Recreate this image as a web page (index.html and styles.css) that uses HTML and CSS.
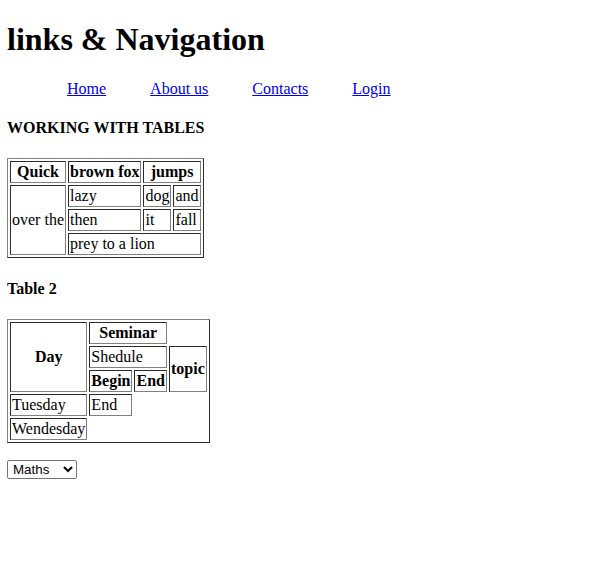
FILE: index.html
```html
<!DOCTYPE html>
<html>
<head>
<meta charset="utf-8">
<title>links &amp; Navigation</title>
<link rel="stylesheet" href="styles.css">
</head>
<body class="page">
<h1 class="title">links &amp; Navigation</h1>
<div class="nav">
  <a class="nav-link" href="#">Home</a>
  <a class="nav-link" href="#">About us</a>
  <a class="nav-link" href="#">Contacts</a>
  <a class="nav-link" href="#">Login</a>
</div>
<h4 class="heading">WORKING WITH TABLES</h4>
<table class="grid">
  <tr>
    <th class="cell head">Quick</th>
    <th class="cell head">brown fox</th>
    <th class="cell head" colspan="2">jumps</th>
  </tr>
  <tr>
    <td class="cell" rowspan="3">over the</td>
    <td class="cell">lazy</td>
    <td class="cell">dog</td>
    <td class="cell">and</td>
  </tr>
  <tr>
    <td class="cell">then</td>
    <td class="cell">it</td>
    <td class="cell">fall</td>
  </tr>
  <tr>
    <td class="cell" colspan="3">prey to a lion</td>
  </tr>
</table>
<h4 class="heading">Table 2</h4>
<table class="grid">
  <tr>
    <th class="cell head" rowspan="3">Day</th>
    <th class="cell head" colspan="2">Seminar</th>
  </tr>
  <tr>
    <td class="cell" colspan="2">Shedule</td>
    <th class="cell head" rowspan="2">topic</th>
  </tr>
  <tr>
    <th class="cell head">Begin</th>
    <th class="cell head">End</th>
  </tr>
  <tr>
    <td class="cell">Tuesday</td>
    <td class="cell">End</td>
  </tr>
  <tr>
    <td class="cell">Wendesday</td>
  </tr>
</table>
<div class="form-row">
  <select class="picker">
    <option>Maths</option>
    <option>Physics</option>
    <option>Chemistry</option>
  </select>
</div>
</body>
</html>
```
FILE: styles.css
```css
.page {
  margin: 0 8px 8px 7px;
  font-family: "Liberation Serif", "Times New Roman", serif;
  font-size: 16px;
  color: #000;
  background: #fff;
}
.title {
  font-size: 32px;
  font-weight: bold;
  margin: 21.44px 0;
}
.nav {
  display: flex;
  gap: 44px;
  padding-left: 60px;
}
.nav-link {
  color: #0000ee;
  text-decoration: underline;
}
.heading {
  font-size: 16px;
  font-weight: bold;
  margin: 21.28px 0;
}
.grid {
  border: 1px outset gray;
  border-spacing: 2px;
  border-collapse: separate;
}
.cell {
  border: 1px inset gray;
  padding: 1px;
  text-align: left;
  vertical-align: middle;
  font-weight: normal;
}
.head {
  font-weight: bold;
  text-align: center;
}
.form-row {
  margin-top: 17px;
}
.picker {
  font-family: "Liberation Sans", Arial, sans-serif;
  font-size: 13.333px;
  color: #000;
  background: #fff;
  border: 1px solid #767676;
  border-radius: 2px;
  padding: 0 0 0 1px;
  width: 70px;
  height: 19px;
}
```
